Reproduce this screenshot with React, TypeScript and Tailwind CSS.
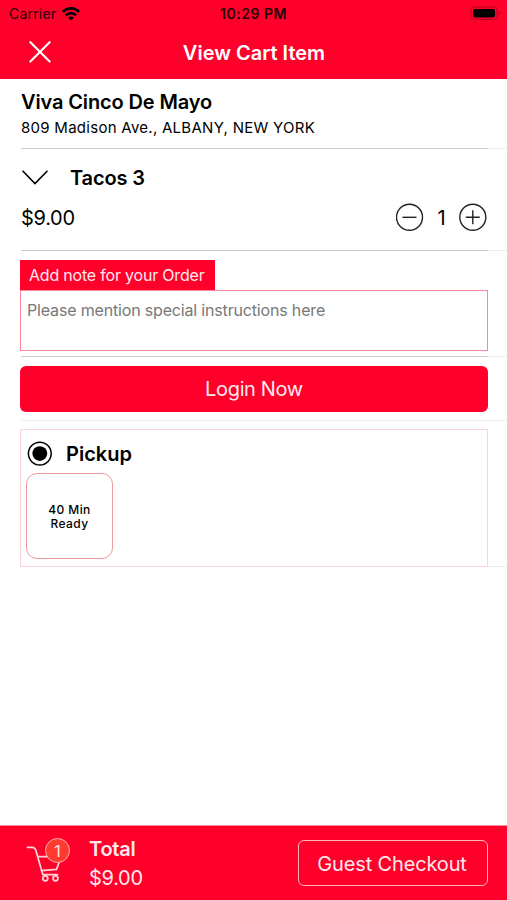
import { useState } from 'react';

function Divider({ faint = false }: { faint?: boolean }) {
    return (
        <div className="flex h-px pl-[21px]">
            <div className={faint ? 'w-[467px] bg-[#ededed]' : 'w-[467px] bg-[#c9c9c9]'} />
            <div className="flex-1 bg-[#ececec]" />
        </div>
    );
}

function StatusBar() {
    return (
        <div className="flex h-[27px] items-center text-[#2a0007]">
            <div className="flex w-[170px] items-center pl-[9px]">
                <span className="w-[47px] whitespace-nowrap text-[14px] leading-[18px] tracking-[0.2px]">Carrier</span>
                <svg className="ml-[6px] h-[14px] w-[18px] text-black" viewBox="0 0 18 14" fill="none" stroke="currentColor" strokeWidth="2.6">
                    <path d="M0.8 4.9C5.4.2 12.6.2 17.2 4.9" />
                    <path d="M3.8 8.3C6.7 5.4 11.3 5.4 14.2 8.3" />
                    <path d="M9 13.6L6.1 10.7Q9 8.4 11.9 10.7Z" fill="currentColor" stroke="none" />
                </svg>
            </div>
            <div className="w-[167px] text-center text-[14px] font-semibold leading-[18px] tracking-[0.5px]">10:29 PM</div>
            <div className="flex flex-1 justify-end pr-[6px]">
                <svg className="h-[15px] w-[31px]" viewBox="0 0 31 15">
                    <rect x="1" y="1" width="26" height="12.5" rx="3.5" fill="none" stroke="#b8001f" />
                    <rect x="3" y="3" width="22" height="8.5" rx="2" fill="#000" />
                    <path d="M28.5 5.2Q31 7.2 28.5 9.2Z" fill="#9d001a" />
                </svg>
            </div>
        </div>
    );
}

function CartIcon({ count }: { count: number }) {
    return (
        <div className="relative h-[46px] w-[46px]">
            <svg className="h-full w-full" viewBox="0 0 46 46" fill="none" stroke="#ffd5dc" strokeWidth="1.7" strokeLinecap="round" strokeLinejoin="round">
                <path d="M1.5 9.3H6Q9 9.3 9.8 12.3L16.8 36.6H31.5" />
                <path d="M12 18.7H35.2L30.5 31.4L15.5 32.6" />
                <circle cx="19.3" cy="40.3" r="2.5" />
                <circle cx="29.5" cy="40.3" r="2.5" />
            </svg>
            <span className="absolute left-[19px] top-0 flex h-[25px] w-[25px] items-center justify-center rounded-full border border-[#ffb0ab] bg-[#ff3b30] text-[16px] text-[#ffe5e5]">
                {count}
            </span>
        </div>
    );
}

export default function App() {
    const [quantity, setQuantity] = useState(1);
    const [note, setNote] = useState('');

    return (
        <div className="flex h-[900px] w-[507px] flex-col bg-white font-['Inter',sans-serif] text-black">
            {/* Header */}
            <header className="h-[79px] bg-[#ff002b]">
                <StatusBar />
                <div className="flex h-[50px] items-center text-white">
                    <button className="ml-[29px] w-[22px]" aria-label="Close">
                        <svg className="h-[22px] w-[22px]" viewBox="0 0 22 22" fill="none" stroke="currentColor" strokeWidth="2.1" strokeLinecap="round">
                            <path d="M1.4 1.2L20.6 20.6M20.6 1.2L1.4 20.6" />
                        </svg>
                    </button>
                    <h1 className="mr-[50px] flex-1 pt-px text-center text-[20px] font-semibold leading-6">View Cart Item</h1>
                </div>
            </header>

            {/* Restaurant */}
            <section className="h-[69px] pl-[21px] pt-[11px]">
                <h2 className="whitespace-nowrap text-[20px] font-semibold leading-[25px] tracking-[-0.13px]">Viva Cinco De Mayo</h2>
                <p className="mt-[3px] whitespace-nowrap text-[15px] leading-5 tracking-[0.27px]">809 Madison Ave., ALBANY, NEW YORK</p>
            </section>
            <Divider />

            {/* Item */}
            <section className="h-[101px] pl-[21px] pr-5 pt-[16px]">
                <div className="flex items-center">
                    <svg className="mr-[21px] h-[16px] w-[28px]" viewBox="0 0 28 16" fill="none" stroke="currentColor" strokeWidth="1.6" strokeLinecap="round">
                        <path d="M2 1.2L14 13.5L26 1.2" />
                    </svg>
                    <h3 className="pt-px text-[20px] font-semibold leading-[25px] tracking-[-0.15px]">Tacos 3</h3>
                </div>
                <div className="mt-[12px] flex h-7 items-center">
                    <span className="flex-1 pt-px text-[20px] tracking-[-0.3px]">$9.00</span>
                    <button aria-label="Remove one" onClick={() => setQuantity(Math.max(1, quantity - 1))}>
                        <svg className="h-7 w-7" viewBox="0 0 28 28" fill="none" stroke="#222" strokeWidth="1.4">
                            <circle cx="13.5" cy="14.3" r="13" />
                            <path d="M6.5 14.3H20.5" />
                        </svg>
                    </button>
                    <span className="w-[35px] pt-px text-center text-[20px]">{quantity}</span>
                    <button aria-label="Add one" onClick={() => setQuantity(quantity + 1)}>
                        <svg className="h-7 w-7" viewBox="0 0 28 28" fill="none" stroke="#222" strokeWidth="1.4">
                            <circle cx="13.8" cy="14.3" r="13" />
                            <path d="M6.8 14.3H20.8M13.8 7.3V21.3" />
                        </svg>
                    </button>
                </div>
            </section>
            <Divider />

            {/* Order note */}
            <section className="h-[105px] pl-5 pt-[9px]">
                <div className="h-[30px] w-[195px] whitespace-nowrap bg-[#ff002b] pl-[9px] text-[16px] leading-[30px] tracking-[-0.2px] text-[#ffe9ed]">
                    Add note for your Order
                </div>
                <textarea
                    className="block h-[61px] w-[468px] resize-none border border-[#ff8599] px-[6px] pt-[9px] text-[16px] leading-5 tracking-[-0.17px] outline-none placeholder:text-[#777]"
                    placeholder="Please mention special instructions here"
                    value={note}
                    onChange={(e) => setNote(e.target.value)}
                />
            </section>
            <Divider />

            {/* Login */}
            <section className="h-[63px] pl-5 pt-[9px]">
                <button className="h-[46px] w-[468px] rounded-[6px] bg-[#ff002b] text-[20px] tracking-[-0.35px] text-[#ffe9ed]">Login Now</button>
            </section>
            <Divider faint />

            {/* Pickup */}
            <section className="flex items-end pt-[8px]">
                <div className="ml-5 h-[138px] w-[468px] border border-[#f9d5da] pl-[5px] pt-[11px]">
                    <div className="flex h-[26px] items-center">
                        <svg className="mr-[14px] h-[26px] w-[26px]" viewBox="0 0 26 26">
                            <circle cx="13.8" cy="12.6" r="11.4" fill="none" stroke="#000" strokeWidth="1.5" />
                            <circle cx="13.8" cy="12.6" r="7.4" />
                        </svg>
                        <span className="text-[20px] font-semibold">Pickup</span>
                    </div>
                    <div className="mt-[6px] flex h-[86px] w-[87px] flex-col items-center justify-center rounded-[11px] border border-[#f09aa2] pt-[2px] text-[12px] font-medium leading-[14px] tracking-[0.4px]">
                        <span>40 Min</span>
                        <span>Ready</span>
                    </div>
                </div>
                <div className="h-px flex-1 bg-[#ececec]" />
            </section>

            {/* Total */}
            <footer className="mt-auto flex h-[75px] items-center border-t border-[#ff8a9c] bg-[#ff002b] text-[#ffe9ed]">
                <div className="ml-[26px] h-[50px]">
                    <CartIcon count={quantity} />
                </div>
                <div className="ml-[17px] flex-1 pt-[2px]">
                    <div className="text-[20px] font-semibold leading-[29px] tracking-[-0.25px]">Total</div>
                    <div className="text-[20px] leading-[29px] tracking-[-0.3px]">$9.00</div>
                </div>
                <button className="mr-[19px] h-[46px] w-[190px] rounded-[6px] border border-[#ffb3bf] pr-[2px] pt-px text-[20px] tracking-[-0.15px]">Guest Checkout</button>
            </footer>
        </div>
    );
}
